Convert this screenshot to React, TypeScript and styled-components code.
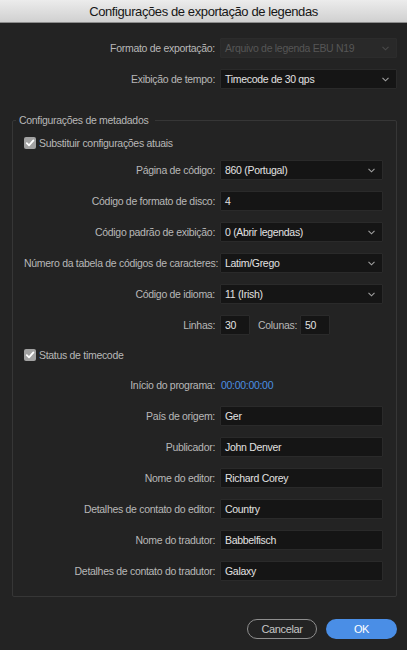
import React from "react";
import styled, { createGlobalStyle } from "styled-components";

const GlobalStyle = createGlobalStyle`
  html, body {
    margin: 0;
    padding: 0;
    background: #232323;
  }
  body {
    font-family: "Liberation Sans", Arial, sans-serif;
    letter-spacing: -0.3px;
    -webkit-font-smoothing: antialiased;
  }
  * {
    box-sizing: border-box;
  }
`;

const Dialog = styled.div`
  width: 407px;
  height: 650px;
  background: #232323;
  display: flex;
  flex-direction: column;
  overflow: hidden;
`;

const TitleBar = styled.div`
  flex: none;
  height: 23px;
  display: flex;
  align-items: center;
  justify-content: center;
  background: linear-gradient(#ececec, #d0d0d0);
  border-bottom: 1px solid #8c8c8c;
  color: #161616;
  font-size: 13px;
  letter-spacing: -0.4px;
  padding-top: 1px;
`;

const Body = styled.div`
  display: flex;
  flex-direction: column;
  padding: 15px 10px 0 0;
`;

const TopRows = styled.div`
  display: flex;
  flex-direction: column;
  gap: 11px;
`;

const Row = styled.div<{ $labelWidth: number }>`
  display: grid;
  grid-template-columns: ${({ $labelWidth }) => $labelWidth}px minmax(0, 1fr);
  column-gap: 5px;
  align-items: center;
  height: 20px;
`;

const Label = styled.div`
  text-align: right;
  color: #b8b8b8;
  font-size: 10.5px;
  white-space: nowrap;
`;

const Field = styled.div<{ $disabled?: boolean; $width?: number }>`
  position: relative;
  height: 20px;
  width: ${({ $width }) => ($width ? `${$width}px` : "100%")};
  display: flex;
  align-items: center;
  padding: 0 16px 0 4px;
  font-size: 10.5px;
  white-space: nowrap;
  overflow: hidden;
  background: ${({ $disabled }) => ($disabled ? "#292929" : "#151515")};
  border: 1px solid ${({ $disabled }) => ($disabled ? "#2c2c2c" : "#2a2a2a")};
  border-radius: 1px;
  color: ${({ $disabled }) => ($disabled ? "#565656" : "#e2e2e2")};
`;

const Chevron = styled.svg<{ $disabled?: boolean }>`
  position: absolute;
  right: 7px;
  top: 7px;
  width: 7px;
  height: 5px;
  stroke: ${({ $disabled }) => ($disabled ? "#4a4a4a" : "#a0a0a0")};
`;

const Group = styled.fieldset`
  margin: 24px 0 0 12px;
  padding: 10px 13px 15px 11px;
  border: 1px solid #363636;
  border-radius: 2px;
  min-width: 0;
`;

const Legend = styled.legend`
  margin-left: -8px;
  padding: 0 7px 0 3px;
  color: #b8b8b8;
  font-size: 10.5px;
  line-height: 14px;
`;

const GroupRows = styled.div`
  display: flex;
  flex-direction: column;
  gap: 11px;
`;

const CheckRow = styled.label<{ $height: number }>`
  display: flex;
  align-items: center;
  gap: 3px;
  height: ${({ $height }) => $height}px;
  color: #b8b8b8;
  font-size: 10.5px;
`;

const CheckBox = styled.span`
  width: 12px;
  height: 12px;
  border-radius: 2px;
  background: #a2a2a2;
  display: flex;
  align-items: center;
  justify-content: center;
`;

const Inline = styled.div`
  display: flex;
  align-items: center;
  gap: 8px;
`;

const InlineLabel = styled(Label)`
  margin-right: -5px;
`;

const TimeValue = styled.div`
  color: #4b8fe0;
  font-size: 10.5px;
  padding-left: 1px;
`;

const Footer = styled.div`
  display: flex;
  justify-content: flex-end;
  gap: 9px;
  margin-top: 22px;
`;

const Button = styled.button<{ $primary?: boolean }>`
  width: ${({ $primary }) => ($primary ? 71 : 70)}px;
  height: 20px;
  border-radius: 10px;
  font-family: inherit;
  font-size: 11px;
  letter-spacing: -0.4px;
  padding: 0;
  cursor: pointer;
  background: ${({ $primary }) => ($primary ? "#4a8ee6" : "transparent")};
  border: ${({ $primary }) => ($primary ? "none" : "1.5px solid #8e8e8e")};
  color: ${({ $primary }) => ($primary ? "#ffffff" : "#c6c6c6")};
`;

function Select({ value, disabled }: { value: string; disabled?: boolean }) {
  return (
    <Field $disabled={disabled}>
      {value}
      <Chevron $disabled={disabled} viewBox="0 0 7 5" fill="none" strokeWidth="1.1">
        <polyline points="0.5,0.8 3.5,3.8 6.5,0.8" />
      </Chevron>
    </Field>
  );
}

function Check({ children, height }: { children: React.ReactNode; height: number }) {
  return (
    <CheckRow $height={height}>
      <CheckBox>
        <svg width="10" height="10" viewBox="0 0 10 10" fill="none">
          <polyline
            points="1.8,5.2 4,7.4 8.4,2.4"
            stroke="#ffffff"
            strokeWidth="1.8"
            strokeLinecap="round"
            strokeLinejoin="round"
          />
        </svg>
      </CheckBox>
      {children}
    </CheckRow>
  );
}

const GROUP_LABEL = 191;

const textFields: [string, string][] = [
  ["País de origem:", "Ger"],
  ["Publicador:", "John Denver"],
  ["Nome do editor:", "Richard Corey"],
  ["Detalhes de contato do editor:", "Country"],
  ["Nome do tradutor:", "Babbelfisch"],
  ["Detalhes de contato do tradutor:", "Galaxy"],
];

export default function App() {
  return (
    <Dialog>
      <GlobalStyle />
      <TitleBar>Configurações de exportação de legendas</TitleBar>
      <Body>
        <TopRows>
          <Row $labelWidth={215}>
            <Label>Formato de exportação:</Label>
            <Select value="Arquivo de legenda EBU N19" disabled />
          </Row>
          <Row $labelWidth={215}>
            <Label>Exibição de tempo:</Label>
            <Select value="Timecode de 30 qps" />
          </Row>
        </TopRows>

        <Group>
          <Legend>Configurações de metadados</Legend>
          <GroupRows>
            <Check height={12}>Substituir configurações atuais</Check>
            <Row $labelWidth={GROUP_LABEL}>
              <Label>Página de código:</Label>
              <Select value="860 (Portugal)" />
            </Row>
            <Row $labelWidth={GROUP_LABEL}>
              <Label>Código de formato de disco:</Label>
              <Field>4</Field>
            </Row>
            <Row $labelWidth={GROUP_LABEL}>
              <Label>Código padrão de exibição:</Label>
              <Select value="0 (Abrir legendas)" />
            </Row>
            <Row $labelWidth={GROUP_LABEL}>
              <Label>Número da tabela de códigos de caracteres:</Label>
              <Select value="Latim/Grego" />
            </Row>
            <Row $labelWidth={GROUP_LABEL}>
              <Label>Código de idioma:</Label>
              <Select value="11 (Irish)" />
            </Row>
            <Row $labelWidth={GROUP_LABEL}>
              <Label>Linhas:</Label>
              <Inline>
                <Field $width={30}>30</Field>
                <InlineLabel>Colunas:</InlineLabel>
                <Field $width={30}>50</Field>
              </Inline>
            </Row>
            <Check height={18}>Status de timecode</Check>
            <Row $labelWidth={GROUP_LABEL}>
              <Label>Início do programa:</Label>
              <TimeValue>00:00:00:00</TimeValue>
            </Row>
            {textFields.map(([label, value]) => (
              <Row $labelWidth={GROUP_LABEL} key={label}>
                <Label>{label}</Label>
                <Field>{value}</Field>
              </Row>
            ))}
          </GroupRows>
        </Group>

        <Footer>
          <Button>Cancelar</Button>
          <Button $primary>OK</Button>
        </Footer>
      </Body>
    </Dialog>
  );
}
